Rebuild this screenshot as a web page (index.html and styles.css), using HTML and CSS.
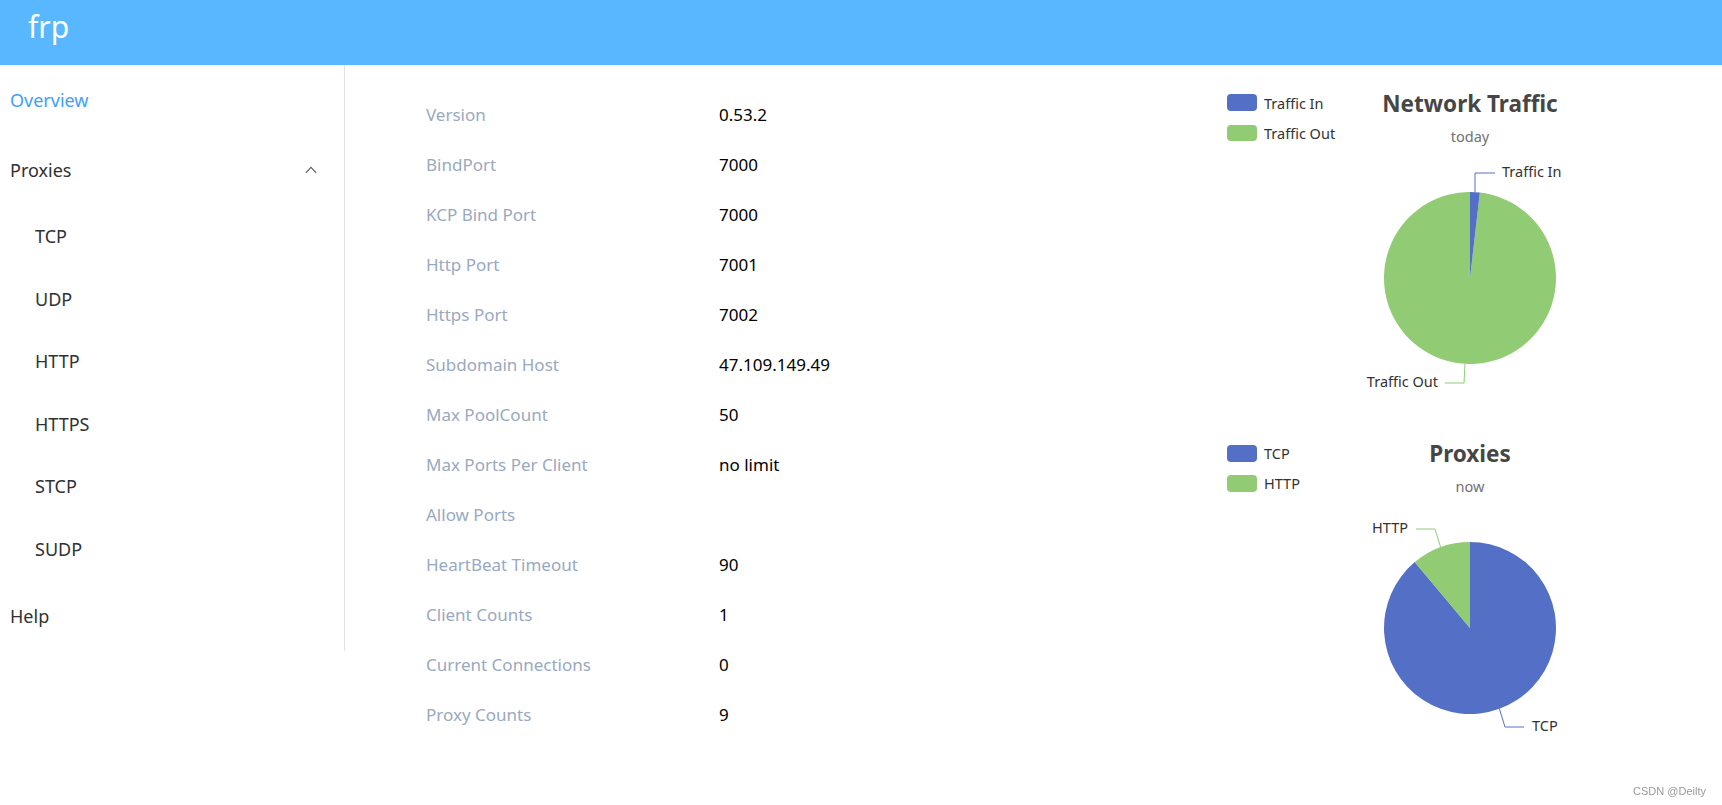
FILE: index.html
```html
<!DOCTYPE html>
<html lang="en">
<head>
<meta charset="utf-8">
<title>frp</title>
<link rel="stylesheet" href="styles.css">
</head>
<body>
<header class="topbar"><span class="brand">frp</span></header>
<div class="layout">
  <aside class="sidebar">
    <ul class="menu">
      <li class="menu-item active">Overview</li>
      <li class="menu-item submenu-title">Proxies
        <svg class="chevron" width="12" height="8" viewBox="0 0 12 8"><polyline points="0.8,6.8 6,1.4 11.2,6.8" fill="none" stroke="#5a5a5a" stroke-width="1.1"/></svg>
      </li>
      <li class="sub-item">TCP</li>
      <li class="sub-item">UDP</li>
      <li class="sub-item">HTTP</li>
      <li class="sub-item">HTTPS</li>
      <li class="sub-item">STCP</li>
      <li class="sub-item">SUDP</li>
      <li class="menu-item">Help</li>
    </ul>
  </aside>
  <main class="main">
    <div class="info">
      <div class="row"><span class="label">Version</span><span class="value">0.53.2</span></div>
      <div class="row"><span class="label">BindPort</span><span class="value">7000</span></div>
      <div class="row"><span class="label">KCP Bind Port</span><span class="value">7000</span></div>
      <div class="row"><span class="label">Http Port</span><span class="value">7001</span></div>
      <div class="row"><span class="label">Https Port</span><span class="value">7002</span></div>
      <div class="row"><span class="label">Subdomain Host</span><span class="value">47.109.149.49</span></div>
      <div class="row"><span class="label">Max PoolCount</span><span class="value">50</span></div>
      <div class="row"><span class="label">Max Ports Per Client</span><span class="value">no limit</span></div>
      <div class="row"><span class="label">Allow Ports</span><span class="value"></span></div>
      <div class="row"><span class="label">HeartBeat Timeout</span><span class="value">90</span></div>
      <div class="row"><span class="label">Client Counts</span><span class="value">1</span></div>
      <div class="row"><span class="label">Current Connections</span><span class="value">0</span></div>
      <div class="row"><span class="label">Proxy Counts</span><span class="value">9</span></div>
    </div>
    <div class="charts">
      <svg class="chart" width="496" height="350" viewBox="0 0 496 350">
        <rect x="5" y="6" width="30" height="17" rx="4" fill="#5470c6"/>
        <text class="legend-text" x="42" y="14.5">Traffic In</text>
        <rect x="5" y="37" width="30" height="16" rx="4" fill="#91cc75"/>
        <text class="legend-text" x="42" y="45">Traffic Out</text>
        <text class="chart-title" x="248" y="15.5">Network Traffic</text>
        <text class="chart-sub" x="248" y="48">today</text>
        <path d="M248 190 L257.88 104.57 A86 86 0 1 1 248 104 Z" fill="#91cc75"/>
        <path d="M248 190 L248 104 A86 86 0 0 1 257.88 104.57 Z" fill="#5470c6"/>
        <polyline points="253,104.5 253,85 273,85" fill="none" stroke="#5470c6" stroke-width="1"/>
        <text class="pie-label" x="280" y="83">Traffic In</text>
        <polyline points="243,276 242,295 223,295" fill="none" stroke="#91cc75" stroke-width="1"/>
        <text class="pie-label end" x="216" y="293">Traffic Out</text>
      </svg>
      <svg class="chart" width="496" height="350" viewBox="0 0 496 350">
        <rect x="5" y="7" width="30" height="17" rx="4" fill="#5470c6"/>
        <text class="legend-text" x="42" y="15">TCP</text>
        <rect x="5" y="37" width="30" height="17" rx="4" fill="#91cc75"/>
        <text class="legend-text" x="42" y="45">HTTP</text>
        <text class="chart-title" x="248" y="15.5">Proxies</text>
        <text class="chart-sub" x="248" y="48">now</text>
        <path d="M248 190 L248 104 A86 86 0 1 1 192.72 124.12 Z" fill="#5470c6"/>
        <path d="M248 190 L192.72 124.12 A86 86 0 0 1 248 104 Z" fill="#91cc75"/>
        <polyline points="277.4,270.8 283,289 302,289" fill="none" stroke="#5470c6" stroke-width="1"/>
        <text class="pie-label" x="310" y="287">TCP</text>
        <polyline points="218.6,109.2 213,91 194,91" fill="none" stroke="#91cc75" stroke-width="1"/>
        <text class="pie-label end" x="186" y="89">HTTP</text>
      </svg>
    </div>
  </main>
</div>
<div class="watermark">CSDN @Deilty</div>
</body>
</html>
```
FILE: styles.css
```css
* { box-sizing: border-box; }
html, body {
  margin: 0;
  padding: 0;
  background: #fff;
  font-family: "Noto Sans", "Open Sans", sans-serif;
}
.topbar {
  height: 65px;
  background: #58b7ff;
  display: flex;
  align-items: center;
  padding-left: 28px;
}
.brand {
  color: #fff;
  font-size: 30px;
  line-height: 1;
  position: relative;
  top: -6px;
}
.layout {
  display: flex;
  align-items: flex-start;
}
.sidebar {
  width: 345px;
  flex: none;
  border-right: 1px solid #e2e2e6;
}
.menu {
  list-style: none;
  margin: 0;
  padding: 0;
}
.menu-item {
  height: 70px;
  line-height: 70px;
  padding-left: 10px;
  font-size: 18px;
  color: #303133;
}
.menu-item.active { color: #409eff; }
.submenu-title {
  display: flex;
  align-items: center;
  justify-content: space-between;
  padding-right: 27px;
}
.chevron { display: block; }
.sub-item {
  height: 62.6px;
  line-height: 62.6px;
  padding-left: 35px;
  font-size: 18px;
  color: #303133;
}
.main {
  flex: 1;
  display: flex;
  justify-content: space-between;
  padding: 24px 4px 0 81px;
}
.info {
  display: flex;
  flex-direction: column;
}
.row {
  display: flex;
  height: 50px;
  align-items: center;
  font-size: 17px;
}
.label {
  width: 293px;
  color: #99a9bf;
}
.value { color: #000; }
.charts {
  width: 496px;
  margin-top: -1px;
  display: flex;
  flex-direction: column;
}
.chart { display: block; }
.legend-text {
  font-family: "Noto Sans", sans-serif;
  font-size: 14.5px;
  fill: #333;
  dominant-baseline: central;
}
.chart-title {
  font-family: "Noto Sans", sans-serif;
  font-size: 22.5px;
  font-weight: bold;
  fill: #464646;
  text-anchor: middle;
  dominant-baseline: central;
}
.chart-sub {
  font-family: "Noto Sans", sans-serif;
  font-size: 14.5px;
  fill: #6e7079;
  text-anchor: middle;
  dominant-baseline: central;
}
.pie-label {
  font-family: "Noto Sans", sans-serif;
  font-size: 14.5px;
  fill: #333;
  dominant-baseline: central;
}
.pie-label.end { text-anchor: end; }
.watermark {
  position: fixed;
  right: 16px;
  bottom: 8px;
  font-family: "Liberation Sans", Arial, sans-serif;
  font-size: 11px;
  color: #999;
}
```
